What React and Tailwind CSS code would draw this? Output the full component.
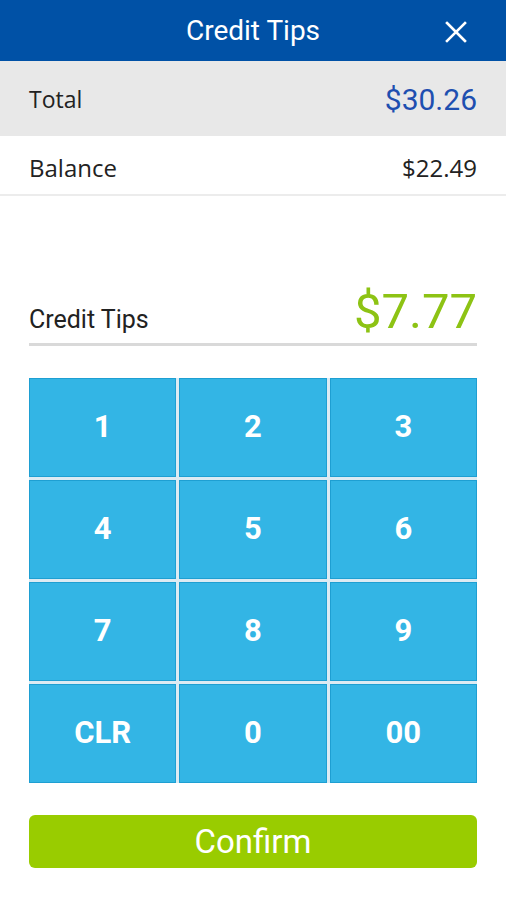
export default function App() {
  const keys = ["1", "2", "3", "4", "5", "6", "7", "8", "9", "CLR", "0", "00"];
  return (
    <div className="w-[506px] h-[900px] bg-white flex flex-col" style={{ fontFamily: "Roboto, 'Noto Sans', sans-serif" }}>
      <div className="h-[61px] bg-[#0051a6] flex items-center justify-center relative">
        <span className="text-white text-[28px] leading-none">Credit Tips</span>
        <svg className="absolute left-[444px] top-[20px]" width="24" height="24" viewBox="0 0 24 24" fill="none" stroke="white" strokeWidth="2.6" strokeLinecap="square">
          <path d="M3 3L21 21M21 3L3 21" />
        </svg>
      </div>
      <div className="h-[75px] bg-[#e8e8e8] flex items-center justify-between px-[29px] pt-[2px]">
        <span className="text-[23px] text-[#222]" style={{ fontFamily: "'Open Sans', sans-serif" }}>Total</span>
        <span className="text-[30px] text-[#1e4fb0]">$30.26</span>
      </div>
      <div className="h-[60px] flex items-center justify-between px-[29px] pt-[6px] border-b-2 border-[#ececec]" style={{ fontFamily: "'Open Sans', sans-serif" }}>
        <span className="text-[24px] text-[#222]">Balance</span>
        <span className="text-[24px] text-[#222]">$22.49</span>
      </div>
      <div className="mx-[29px] mt-[91px] flex items-end justify-between border-b-[3px] border-[#d9d9d9] pb-[7px]">
        <span className="text-[25px] text-[#222] leading-none mb-[4px]">Credit Tips</span>
        <span className="text-[49px] text-[#8dc314] leading-none">$7.77</span>
      </div>
      <div className="mx-[29px] mt-[32px] grid grid-cols-3 gap-[3px] bg-[#dcebf3]">
        {keys.map((k) => (
          <div key={k} className="h-[99px] bg-[#33b5e5] border border-[#1e9fd2] flex items-center justify-center">
            <span className="text-white text-[31px] font-bold">{k}</span>
          </div>
        ))}
      </div>
      <div className="mx-[29px] mt-[32px] h-[53px] bg-[#99cc00] rounded-[6px] flex items-center justify-center">
        <span className="text-white text-[33px] leading-none">Confirm</span>
      </div>
    </div>
  );
}
